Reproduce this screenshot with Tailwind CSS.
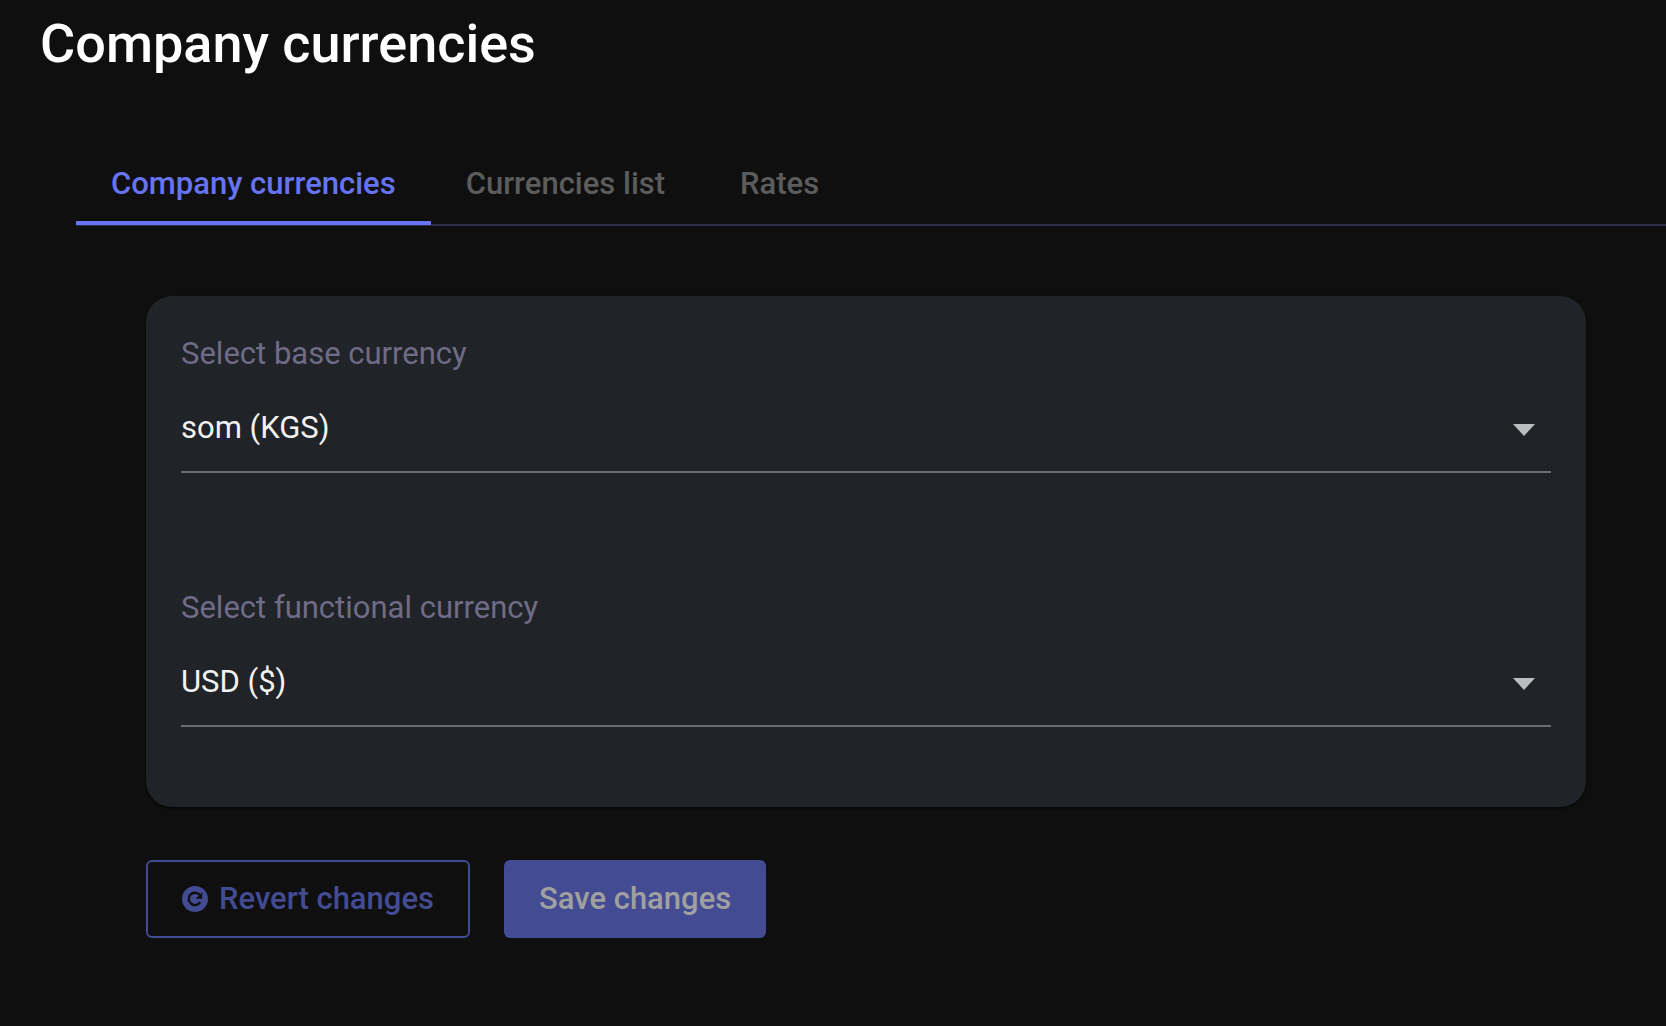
<!DOCTYPE html>
<html lang="en">
<head>
<meta charset="utf-8">
<meta name="viewport" content="width=device-width, initial-scale=1">
<title>Company currencies</title>
<script src="https://cdn.jsdelivr.net/npm/@tailwindcss/browser@4"></script>
</head>
<body class="min-h-screen bg-[#0f0f0f] font-[Roboto,sans-serif] text-[31px] leading-10 text-[#f2f2f2]">
  <header class="px-10 pt-3 pb-16">
    <h1 class="text-[54px] leading-16 font-medium text-white">Company currencies</h1>
  </header>

  <main class="pl-19">
    <nav class="flex border-b-2 border-[#2d2f4a] font-medium text-[#5c5c5c]" aria-label="Currency sections">
      <a href="#company" aria-current="page" class="-mb-px border-b-4 border-[#6674f4] px-[35px] pt-6 pb-[17px] text-[#6674f4]">Company currencies</a>
      <a href="#list" class="px-[35px] pt-6 pb-4">Currencies list</a>
      <a href="#rates" class="px-10 pt-6 pb-4">Rates</a>
    </nav>

    <form class="pt-[70px] pr-20 pl-[70px]">
      <div class="flex flex-col gap-[115px] rounded-[26px] bg-[#202327] px-[35px] pt-[38px] pb-20 shadow-sm shadow-black/60">
        <div class="flex flex-col gap-[26px]">
          <label for="base" class="text-[#706b87]">Select base currency</label>
          <div class="grid items-center border-b-2 border-[#6c6c6e] pt-2 pb-[23px]">
            <select id="base" class="col-start-1 row-start-1 h-10 w-full appearance-none outline-none">
              <option>som (KGS)</option>
            </select>
            <svg class="pointer-events-none col-start-1 row-start-1 mt-1 mr-4 h-3 w-[22px] justify-self-end fill-[#bcbdbe]" viewBox="0 0 22 12" aria-hidden="true"><path d="M0 0h22L11 12z"/></svg>
          </div>
        </div>
        <div class="flex flex-col gap-[26px]">
          <label for="functional" class="text-[#706b87]">Select functional currency</label>
          <div class="grid items-center border-b-2 border-[#6c6c6e] pt-2 pb-[23px]">
            <select id="functional" class="col-start-1 row-start-1 h-10 w-full appearance-none outline-none">
              <option>USD ($)</option>
            </select>
            <svg class="pointer-events-none col-start-1 row-start-1 mt-1 mr-4 h-3 w-[22px] justify-self-end fill-[#bcbdbe]" viewBox="0 0 22 12" aria-hidden="true"><path d="M0 0h22L11 12z"/></svg>
          </div>
        </div>
      </div>

      <div class="flex gap-[34px] pt-[53px] font-medium">
        <button type="reset" class="flex h-[78px] items-center gap-[11px] rounded-md border-2 border-[#434b93] px-[34px] text-[#434b93]">
          <svg class="size-[26px]" viewBox="0 0 26 26" aria-hidden="true">
            <circle cx="13" cy="13" r="13" fill="#434b93"/>
            <path d="M18.2 16.2a6.2 6.2 0 1 1-.6-7.4" fill="none" stroke="#0f0f0f" stroke-width="2.4"/>
            <path d="M20.2 6.2v6.6h-6.6z" fill="#0f0f0f"/>
          </svg>
          Revert changes
        </button>
        <button type="submit" class="h-[78px] rounded-md bg-[#434b93] px-[35px] text-[#a0a0a0]">Save changes</button>
      </div>
    </form>
  </main>
</body>
</html>
